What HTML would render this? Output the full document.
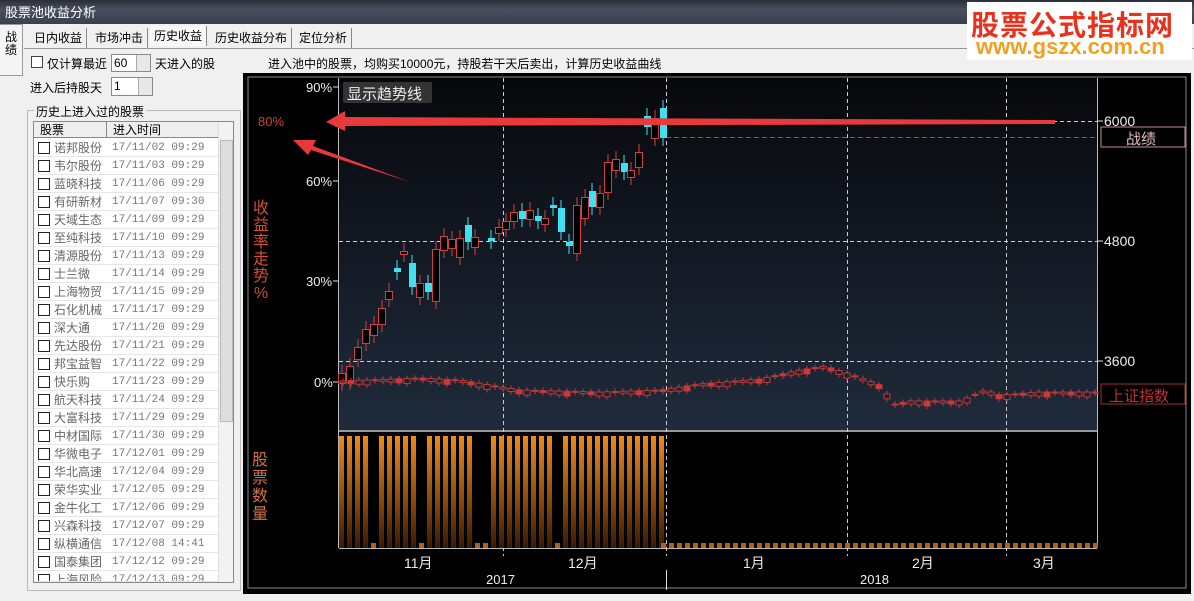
<!DOCTYPE html>
<html><head><meta charset="utf-8">
<style>
*{margin:0;padding:0;box-sizing:border-box}
body{width:1194px;height:601px;overflow:hidden;background:#f0f0f0;font-family:"Liberation Sans","Noto Sans CJK SC",sans-serif;font-size:12px;color:#000;position:relative}
.a{position:absolute;white-space:nowrap}
.title{left:0;top:0;width:1194px;height:24px;background:linear-gradient(#2a2e38,#4a5060 40%,#3a3f4c);color:#fff;font-size:13px;line-height:26px;padding-left:5px}
.tab{top:28px;height:20px;font-size:12px;line-height:20px;padding:0 4px;border-right:1px solid #888}
.spin{background:#fff;border:1px solid #888;font-size:12px;line-height:16px;padding-left:2px}
.spin i{position:absolute;right:0;top:0;width:14px;height:100%;border-left:1px solid #aaa;background:#e8e8e8}
.row{left:34px;width:184px;height:18px;border-bottom:1px solid #e6e6e6;font-size:12px;color:#666;line-height:18px}
.row b{position:absolute;left:4px;top:3px;width:12px;height:12px;border:1.5px solid #222;background:#fff}
.row span{position:absolute;left:20px}
.row em{position:absolute;left:78px;font-style:normal;font-family:"Liberation Mono",monospace;font-size:11px;color:#777}
</style></head><body>
<div class="a title">股票池收益分析</div>
<div class="a" style="left:0;top:24px;width:23px;height:52px;background:#f4f4f4;border:1px solid #999;border-left:none;font-size:12px;line-height:13px;padding:6px 5px">战<br>绩</div>
<div class="a tab" style="left:30px">日内收益</div>
<div class="a tab" style="left:91px">市场冲击</div>
<div class="a tab" style="left:150px;top:26px;background:#f8f8f8">历史收益</div>
<div class="a tab" style="left:211px">历史收益分布</div>
<div class="a tab" style="left:295px">定位分析</div>
<div class="a" style="left:24px;top:48px;width:1170px;height:1px;background:#999"></div>
<div class="a" style="left:31px;top:56px;width:12px;height:12px;border:1px solid #444;background:#fff"></div>
<div class="a" style="left:47px;top:55px;font-size:12px">仅计算最近</div>
<div class="a spin" style="left:111px;top:54px;width:40px;height:18px">60<i></i></div>
<div class="a" style="left:155px;top:55px;font-size:12px">天进入的股</div>
<div class="a" style="left:30px;top:79px;font-size:12px">进入后持股天</div>
<div class="a spin" style="left:111px;top:77px;width:42px;height:19px">1<i></i></div>
<div class="a" style="left:268px;top:55px;font-size:12px">进入池中的股票，均购买10000元，持股若干天后卖出，计算历史收益曲线</div>
<div class="a" style="left:27px;top:110px;width:214px;height:481px;border:1px solid #bbb"></div>
<div class="a" style="left:34px;top:103px;background:#f0f0f0;font-size:12px;padding:0 2px">历史上进入过的股票</div>
<div class="a" style="left:33px;top:121px;width:201px;height:462px;background:#fff;border:1px solid #888;overflow:hidden"></div>
<div class="a" style="left:34px;top:122px;width:184px;height:16px;background:#eee;border-bottom:1px solid #888;font-size:12px;line-height:16px"><span style="position:absolute;left:6px">股票</span><span style="position:absolute;left:72px;top:0;height:16px;border-left:1px solid #888;padding-left:6px">进入时间</span></div>
<div class="a" style="left:218px;top:122px;width:15px;height:460px;background:#f2f2f2;border-left:1px solid #ddd"><div style="position:absolute;left:1px;top:18px;width:13px;height:282px;background:#ddd;border:1px solid #bbb"></div></div>
<div class="a row" style="top:139px"><b></b><span>诺邦股份</span><em>17/11/02 09:29</em></div>
<div class="a row" style="top:157px"><b></b><span>韦尔股份</span><em>17/11/03 09:29</em></div>
<div class="a row" style="top:175px"><b></b><span>蓝晓科技</span><em>17/11/06 09:29</em></div>
<div class="a row" style="top:193px"><b></b><span>有研新材</span><em>17/11/07 09:30</em></div>
<div class="a row" style="top:211px"><b></b><span>天域生态</span><em>17/11/09 09:29</em></div>
<div class="a row" style="top:229px"><b></b><span>至纯科技</span><em>17/11/10 09:29</em></div>
<div class="a row" style="top:247px"><b></b><span>清源股份</span><em>17/11/13 09:29</em></div>
<div class="a row" style="top:265px"><b></b><span>士兰微</span><em>17/11/14 09:29</em></div>
<div class="a row" style="top:283px"><b></b><span>上海物贸</span><em>17/11/15 09:29</em></div>
<div class="a row" style="top:301px"><b></b><span>石化机械</span><em>17/11/17 09:29</em></div>
<div class="a row" style="top:319px"><b></b><span>深大通</span><em>17/11/20 09:29</em></div>
<div class="a row" style="top:337px"><b></b><span>先达股份</span><em>17/11/21 09:29</em></div>
<div class="a row" style="top:355px"><b></b><span>邦宝益智</span><em>17/11/22 09:29</em></div>
<div class="a row" style="top:373px"><b></b><span>快乐购</span><em>17/11/23 09:29</em></div>
<div class="a row" style="top:391px"><b></b><span>航天科技</span><em>17/11/24 09:29</em></div>
<div class="a row" style="top:409px"><b></b><span>大富科技</span><em>17/11/29 09:29</em></div>
<div class="a row" style="top:427px"><b></b><span>中材国际</span><em>17/11/30 09:29</em></div>
<div class="a row" style="top:445px"><b></b><span>华微电子</span><em>17/12/01 09:29</em></div>
<div class="a row" style="top:463px"><b></b><span>华北高速</span><em>17/12/04 09:29</em></div>
<div class="a row" style="top:481px"><b></b><span>荣华实业</span><em>17/12/05 09:29</em></div>
<div class="a row" style="top:499px"><b></b><span>金牛化工</span><em>17/12/06 09:29</em></div>
<div class="a row" style="top:517px"><b></b><span>兴森科技</span><em>17/12/07 09:29</em></div>
<div class="a row" style="top:535px"><b></b><span>纵横通信</span><em>17/12/08 14:41</em></div>
<div class="a row" style="top:553px"><b></b><span>国泰集团</span><em>17/12/12 09:29</em></div>
<div class="a row" style="top:571px;height:11px;overflow:hidden"><b></b><span>上海风险</span><em>17/12/13 09:29</em></div>

<div class="a" style="left:243px;top:73px;width:948px;height:521px;background:#000"></div>
<svg class="a" style="left:0;top:0" width="1194" height="601">
<defs>
<linearGradient id="g1" x1="0" y1="0" x2="0" y2="1"><stop offset="0" stop-color="#07080b"/><stop offset="1" stop-color="#1f2b3c"/></linearGradient>
<linearGradient id="g2" x1="0" y1="0" x2="0" y2="1"><stop offset="0" stop-color="#f08a20"/><stop offset="1" stop-color="#3a1a04"/></linearGradient>
</defs>
<rect x="248" y="77" width="938" height="511" fill="none" stroke="#8a8a8a"/>
<rect x="339" y="78" width="758" height="352" fill="url(#g1)"/>
<line x1="339" y1="431" x2="1097" y2="431" stroke="#999" stroke-width="2"/>
<line x1="338.5" y1="78" x2="338.5" y2="548" stroke="#bbb"/>
<line x1="1097.5" y1="78" x2="1097.5" y2="548" stroke="#bbb"/>
<line x1="339" y1="548.5" x2="1097" y2="548.5" stroke="#bbb"/>
<g stroke="#ccc" stroke-dasharray="4,3">
<line x1="339" y1="121.5" x2="1097" y2="121.5"/><line x1="339" y1="241.5" x2="1097" y2="241.5"/><line x1="339" y1="361.5" x2="1097" y2="361.5"/>
<line x1="503.5" y1="78" x2="503.5" y2="556"/><line x1="666.5" y1="78" x2="666.5" y2="556"/><line x1="847.5" y1="78" x2="847.5" y2="556"/><line x1="1006.5" y1="78" x2="1006.5" y2="556"/>
</g>
<line x1="666" y1="137.5" x2="1097" y2="137.5" stroke="#c04040" stroke-dasharray="5,3"/>
<g stroke="#ddd"><line x1="333" y1="87" x2="339" y2="87"/><line x1="333" y1="181" x2="339" y2="181"/><line x1="333" y1="281" x2="339" y2="281"/><line x1="333" y1="382" x2="339" y2="382"/>
<line x1="1097" y1="121" x2="1103" y2="121"/><line x1="1097" y1="241" x2="1103" y2="241"/><line x1="1097" y1="361" x2="1103" y2="361"/>
<line x1="666.5" y1="570" x2="666.5" y2="590"/></g>
<g id="cd"></g>
<g id="bars"></g>
<polygon points="1055,120 345,117 345,111 326,122 345,131 345,126 1055,124" fill="#e83a3a"/>
<polygon points="410,182 313,146 316,140 293,140 308,155 311,150" fill="#e83a3a"/>
<rect x="1101" y="127" width="84" height="20" fill="none" stroke="#c09090"/>
<rect x="1101" y="384" width="84" height="20" fill="none" stroke="#a03030"/>
<rect x="343" y="82" width="89" height="21" fill="#333" rx="2"/>
</svg>
<div class="a" style="left:347px;top:83px;color:#eee;font-size:15px">显示趋势线</div>
<div class="a" style="left:306px;top:80px;color:#eee;font-size:13px">90%</div>
<div class="a" style="left:306px;top:174px;color:#eee;font-size:13px">60%</div>
<div class="a" style="left:306px;top:274px;color:#eee;font-size:13px">30%</div>
<div class="a" style="left:314px;top:375px;color:#eee;font-size:13px">0%</div>
<div class="a" style="left:258px;top:114px;color:#d04040;font-size:13px">80%</div>
<div class="a" style="left:252px;top:200px;color:#d05030;font-size:16px;line-height:17px;text-align:center;width:18px">收<br>益<br>率<br>走<br>势<br>%</div>
<div class="a" style="left:252px;top:452px;color:#d07050;font-size:16px;line-height:18px;width:18px">股<br>票<br>数<br>量</div>
<div class="a" style="left:1104px;top:113px;color:#eee;font-size:14px">6000</div>
<div class="a" style="left:1104px;top:233px;color:#eee;font-size:14px">4800</div>
<div class="a" style="left:1104px;top:353px;color:#eee;font-size:14px">3600</div>
<div class="a" style="left:1126px;top:128px;color:#e0c0c0;font-size:15px">战绩</div>
<div class="a" style="left:1109px;top:385px;color:#c03030;font-size:15px">上证指数</div>
<div class="a" style="left:404px;top:553px;color:#eee;font-size:14px">11月</div>
<div class="a" style="left:568px;top:553px;color:#eee;font-size:14px">12月</div>
<div class="a" style="left:743px;top:553px;color:#eee;font-size:14px">1月</div>
<div class="a" style="left:912px;top:553px;color:#eee;font-size:14px">2月</div>
<div class="a" style="left:1033px;top:553px;color:#eee;font-size:14px">3月</div>
<div class="a" style="left:486px;top:572px;color:#eee;font-size:13px">2017</div>
<div class="a" style="left:860px;top:572px;color:#eee;font-size:13px">2018</div>
<div class="a" style="left:967px;top:2px;width:225px;height:58px;background:#fff"></div>
<div class="a" style="left:971px;top:4px;color:#e8321e;font-size:28px;font-weight:bold;letter-spacing:1px">股票公式指标网</div>
<div class="a" style="left:976px;top:34px;color:#f2a020;font-size:22px;font-weight:bold">www.gszx.com.cn</div>
<script>
var ns="http://www.w3.org/2000/svg",cd=document.getElementById("cd"),bs=document.getElementById("bars");
function el(t,a,p){var e=document.createElementNS(ns,t);for(var k in a)e.setAttribute(k,a[k]);p.appendChild(e);}
var C=[[342,373,383,'r'],[350,366,382,'r'],[358,347,359,'r'],[366,329,343,'r'],[374,324,335,'r'],[382,308,324,'r'],[389,291,299,'r'],[397,268,272,'c'],[404,251,254,'r'],[412,263,287,'c'],[420,283,297,'r'],[428,283,292,'c'],[436,249,301,'r'],[444,236,250,'r'],[452,239,248,'r'],[460,238,257,'r'],[468,225,242,'c'],[475,237,247,'r'],[491,238,241,'c'],[499,227,233,'r'],[506,221,229,'r'],[514,212,221,'r'],[522,211,219,'c'],[530,210,219,'r'],[538,216,221,'c'],[545,218,224,'r'],[553,205,208,'c'],[561,208,232,'c'],[569,242,246,'c'],[577,205,253,'r'],[585,197,218,'r'],[592,191,207,'c'],[600,193,207,'r'],[608,162,192,'r'],[616,159,170,'r'],[624,163,172,'c'],[631,170,177,'r'],[639,152,167,'r'],[647,116,127,'c'],[655,118,138,'r'],[663,108,138,'c']];
C.forEach(function(c){var col=c[3]=='c'?'#40e0f0':'#d04040';el('line',{x1:c[0],x2:c[0],y1:c[1]-8,y2:c[2]+8,stroke:col},cd);
if(c[3]=='c')el('rect',{x:c[0]-3,y:c[1],width:7,height:c[2]-c[1],fill:col},cd);else el('rect',{x:c[0]-3.5,y:c[1]+.5,width:7,height:c[2]-c[1],fill:'#000',stroke:col},cd);});
var P=[[340,381],[420,378],[460,380],[520,390],[600,392],[660,390],[700,384],[760,379],[800,370],[825,366],[850,374],[880,385],[895,404],[910,401],[960,401],[985,390],[1000,395],[1040,392],[1097,392]];
function yat(x){for(var i=0;i<P.length-1;i++)if(x>=P[i][0]&&x<=P[i+1][0])return P[i][1]+(P[i+1][1]-P[i][1])*(x-P[i][0])/(P[i+1][0]-P[i][0]);return 392;}
for(var x=343;x<1096;x+=8){var y=yat(x),h=(x*7%5)+1;el('line',{x1:x,x2:x,y1:y-3,y2:y+h+3,stroke:'#c03838'},cd);el('rect',{x:x-3,y:y,width:6,height:h,fill:(x%3)?'#1a2230':'#d03838',stroke:'#c03838'},cd);}
var sm={4:1,10:1,17:1,18:1,27:1};
for(var i=0;i<41;i++){var bx=339+i*8;if(sm[i])el('rect',{x:bx,y:543,width:5,height:5,fill:'#b06020'},bs);else el('rect',{x:bx,y:436,width:5,height:112,fill:'url(#g2)'},bs);}
for(var x=661;x<1095;x+=8)el('rect',{x:x,y:543,width:5,height:5,fill:'#b06020'},bs);
</script>
</body></html>
